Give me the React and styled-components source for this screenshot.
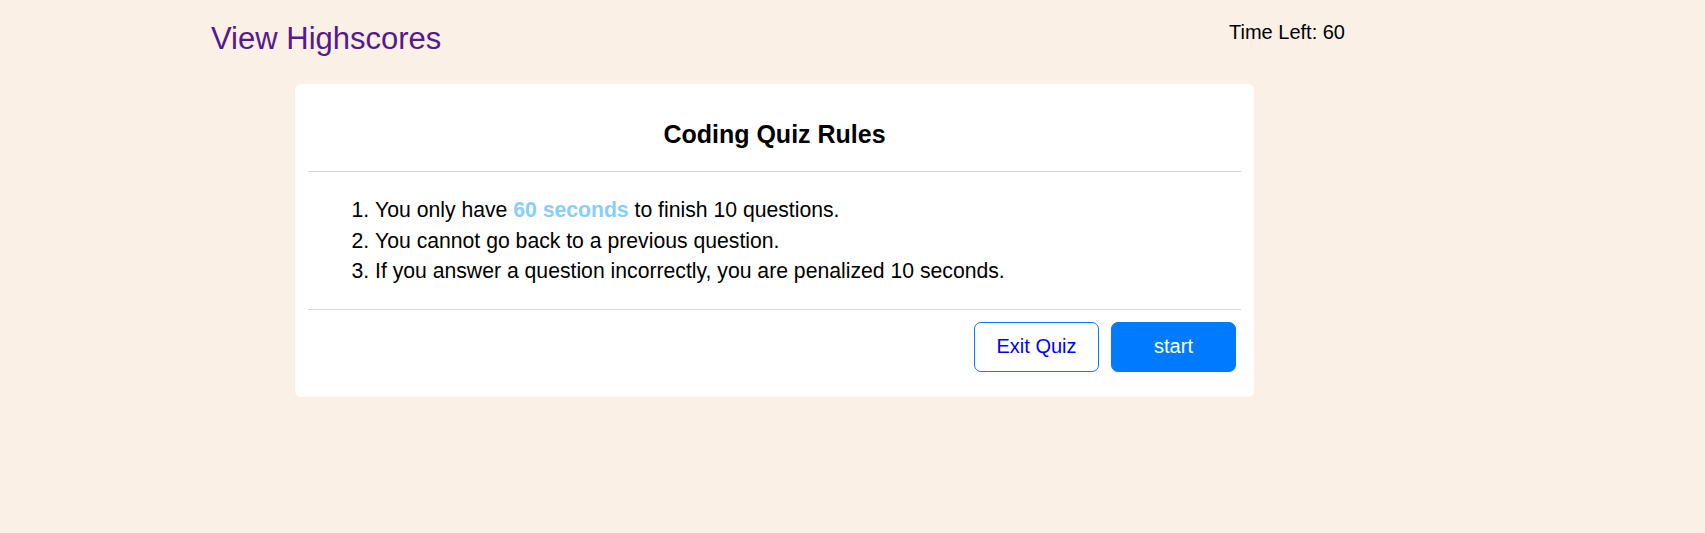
import React from "react";
import styled, { createGlobalStyle } from "styled-components";

const GlobalStyle = createGlobalStyle`
  html, body {
    margin: 0;
    padding: 0;
    background: #faf0e6;
    font-family: "Liberation Sans", Arial, sans-serif;
    color: #000;
  }
`;

const Page = styled.div`
  min-height: 533px;
  background: #faf0e6;
`;

const Header = styled.header`
  display: flex;
  justify-content: space-between;
  align-items: flex-start;
  padding: 22px 360px 0 211px;
`;

const HighscoresLink = styled.a`
  font-size: 31px;
  line-height: 34px;
  color: #551a8b;
  text-decoration: none;
  cursor: pointer;
`;

const Timer = styled.div`
  font-size: 20px;
  line-height: 21px;
  color: #000;
`;

const Card = styled.section`
  width: 959px;
  margin: 28px 0 0 295px;
  background: #fff;
  border-radius: 6px;
  padding: 0 13px 13px;
  box-sizing: border-box;
`;

const CardHeader = styled.div`
  padding: 36px 0 23px;
  text-align: center;
`;

const Title = styled.h2`
  margin: 0;
  font-size: 25px;
  line-height: 28px;
  font-weight: 700;
`;

const Divider = styled.hr`
  margin: 0;
  border: 0;
  border-top: 1px solid #d3d3d3;
`;

const CardBody = styled.div`
  padding: 23px 0 22px;
`;

const RulesList = styled.ol`
  margin: 0;
  padding-left: 67px;
  font-size: 21.2px;
  line-height: 30.5px;
`;

const Highlight = styled.span`
  color: #87cefa;
  font-weight: 700;
`;

const CardFooter = styled.div`
  display: flex;
  justify-content: flex-end;
  gap: 12px;
  padding: 12px 5px 12px 0;
`;

const Button = styled.button`
  width: 125px;
  height: 50px;
  box-sizing: border-box;
  border-radius: 7px;
  font-family: "Liberation Sans", Arial, sans-serif;
  font-size: 20px;
  cursor: pointer;
  border: 1px solid #007bff;
  background: ${(p) => (p.$primary ? "#007bff" : "#fff")};
  color: ${(p) => (p.$primary ? "#fff" : "#0000ff")};
`;

export default function App() {
  return (
    <Page>
      <GlobalStyle />
      <Header>
        <HighscoresLink>View Highscores</HighscoresLink>
        <Timer>Time Left: 60</Timer>
      </Header>
      <Card>
        <CardHeader>
          <Title>Coding Quiz Rules</Title>
        </CardHeader>
        <Divider />
        <CardBody>
          <RulesList>
            <li>
              You only have <Highlight>60 seconds</Highlight> to finish 10 questions.
            </li>
            <li>You cannot go back to a previous question.</li>
            <li>If you answer a question incorrectly, you are penalized 10 seconds.</li>
          </RulesList>
        </CardBody>
        <Divider />
        <CardFooter>
          <Button>Exit Quiz</Button>
          <Button $primary>start</Button>
        </CardFooter>
      </Card>
    </Page>
  );
}
